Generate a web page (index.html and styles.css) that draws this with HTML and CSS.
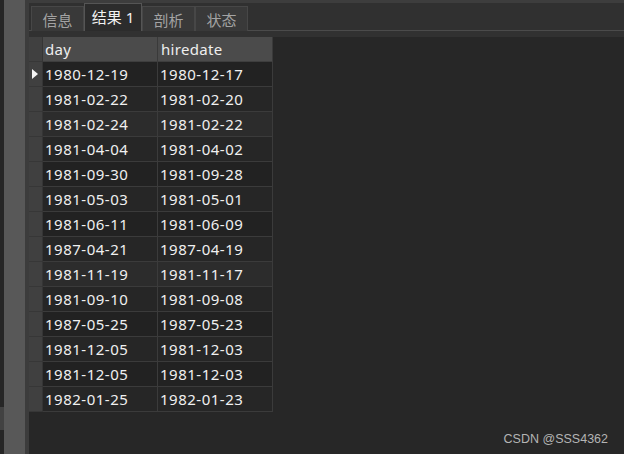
FILE: index.html
```html
<!DOCTYPE html>
<html lang="zh-CN">
<head>
    <meta charset="UTF-8">
    <meta name="viewport" content="width=device-width, initial-scale=1.0">
    <title>结果 1</title>
    <link rel="stylesheet" href="styles.css">
</head>
<body>
    <div class="app">
        <div class="edge"><span class="edge-mark"></span></div>
        <div class="side-scroll"></div>
        <div class="splitter"></div>

        <div class="main">
            <div class="tabbar">
                <div class="tab">信息</div>
                <div class="tab active">结果 1</div>
                <div class="tab">剖析</div>
                <div class="tab">状态</div>
            </div>
            <div class="tab-gap"></div>

            <div class="grid" id="grid">
                <div class="rowhead"></div>
                <div class="head">day</div>
                <div class="head">hiredate</div>
            </div>
        </div>

        <div class="watermark">CSDN @SSS4362</div>
    </div>

    <script>
        const rows = [
            ['1980-12-19', '1980-12-17'],
            ['1981-02-22', '1981-02-20'],
            ['1981-02-24', '1981-02-22'],
            ['1981-04-04', '1981-04-02'],
            ['1981-09-30', '1981-09-28'],
            ['1981-05-03', '1981-05-01'],
            ['1981-06-11', '1981-06-09'],
            ['1987-04-21', '1987-04-19'],
            ['1981-11-19', '1981-11-17'],
            ['1981-09-10', '1981-09-08'],
            ['1987-05-25', '1987-05-23'],
            ['1981-12-05', '1981-12-03'],
            ['1981-12-05', '1981-12-03'],
            ['1982-01-25', '1982-01-23']
        ];
        const lighter = [2, 8];
        const grid = document.getElementById('grid');

        rows.forEach((row, i) => {
            const tone = lighter.includes(i) ? 'light' : (i % 2 ? 'even' : 'odd');
            const head = document.createElement('div');
            head.className = 'rowhead' + (i === 0 ? ' current' : '');
            grid.appendChild(head);
            row.forEach(value => {
                const cell = document.createElement('div');
                cell.className = 'cell ' + tone;
                cell.textContent = value;
                grid.appendChild(cell);
            });
        });
    </script>
</body>
</html>
```

FILE: styles.css
```css
html, body {
    margin: 0;
    height: 100%;
}

body {
    font-family: 'Noto Sans', 'Noto Sans CJK SC', sans-serif;
    background-color: #262626;
    overflow: hidden;
}

.app {
    display: flex;
    height: 454px;
    position: relative;
}

.edge {
    width: 4px;
    background-color: #262626;
    display: flex;
    flex-direction: column;
    padding-top: 407px;
    box-sizing: border-box;
}

.edge-mark {
    height: 23px;
    background-color: #424242;
}

.side-scroll {
    width: 21px;
    background-color: #585858;
}

.splitter {
    width: 4px;
    background-color: #3c3c3c;
}

.main {
    flex: 1;
    display: flex;
    flex-direction: column;
    background-color: #272727;
}

.tabbar {
    height: 31px;
    box-sizing: border-box;
    background-color: #303030;
    border-top: 3px solid #3d3d3d;
    border-bottom: 1px solid #4b4b4b;
    display: flex;
    align-items: flex-end;
    padding-left: 2px;
}

.tab {
    height: 25px;
    box-sizing: border-box;
    width: 53px;
    border: 1px solid #474747;
    border-bottom: none;
    background-color: #393939;
    color: #a3a3a3;
    font-size: 15px;
    display: flex;
    align-items: center;
    justify-content: center;
    margin-bottom: -1px;
}

.tab.active {
    height: 28px;
    width: 58px;
    margin-top: -3px;
    background-color: #2c2c2c;
    border-color: #555;
    color: #f2f2f2;
    padding-bottom: 3px;
}

.tab-gap {
    height: 6px;
    background-color: #313131;
}

.grid {
    display: grid;
    grid-template-columns: 14px 115px 115px;
    grid-auto-rows: 25px;
    width: 244px;
}

.grid > div {
    box-sizing: border-box;
    border-right: 1px solid #3b3b3b;
    border-bottom: 1px solid #3b3b3b;
    font-size: 15px;
    letter-spacing: 0.5px;
    line-height: 24px;
    padding-left: 2px;
    color: #f0f0f0;
    white-space: nowrap;
}

.grid > .rowhead {
    background-color: #404040;
    border-right-color: #353535;
    border-bottom-color: #373737;
    padding-left: 0;
    display: flex;
    align-items: center;
    justify-content: center;
}

.rowhead.current::before {
    content: "";
    border-left: 6px solid #f4f4f4;
    border-top: 5px solid transparent;
    border-bottom: 5px solid transparent;
    margin-left: -2px;
}

.grid > .head {
    background-color: #4b4b4b;
    border-right-color: #3a3a3a;
    border-bottom-color: #3e3e3e;
    color: #eeeeee;
    letter-spacing: 0.3px;
}

.grid > .head + .head {
    padding-left: 3px;
}

.cell.odd { background-color: #222222; }
.cell.even { background-color: #262626; }
.cell.light { background-color: #2c2c2c; }

.watermark {
    position: absolute;
    right: 16px;
    bottom: 8px;
    font-family: 'Liberation Sans', Arial, sans-serif;
    font-size: 12.5px;
    color: #b4b4b4;
}
```
